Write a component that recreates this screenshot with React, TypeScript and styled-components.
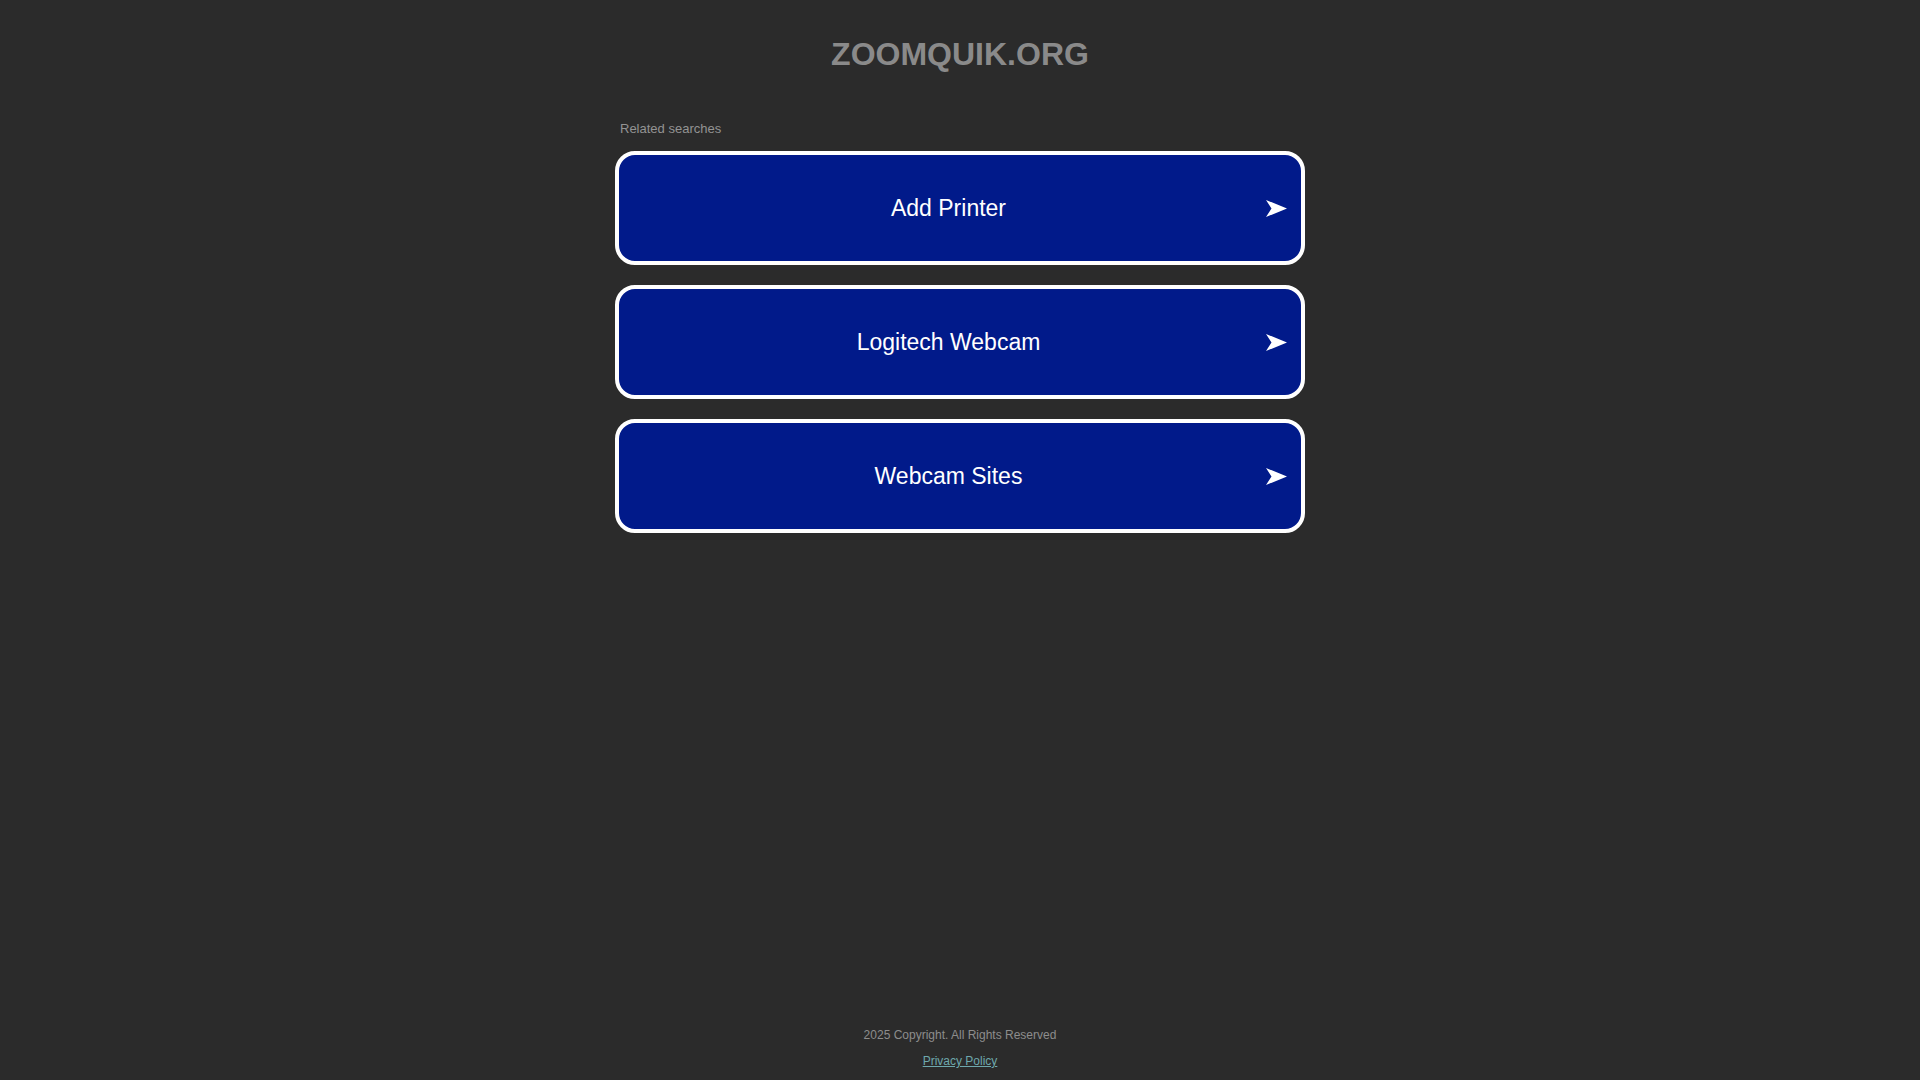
import React from 'react';
import styled, { createGlobalStyle } from 'styled-components';

const GlobalStyle = createGlobalStyle`
  html, body {
    margin: 0;
    padding: 0;
    background: #2b2b2b;
  }
  body {
    font-family: 'Liberation Sans', Arial, sans-serif;
  }
`;

const searches = ['Add Printer', 'Logitech Webcam', 'Webcam Sites'];

const Page = styled.div`
  min-height: 100vh;
  display: flex;
  flex-direction: column;
  align-items: center;
`;

const Title = styled.h1`
  margin: 36px 0 0;
  font-size: 32px;
  line-height: 36px;
  font-weight: 700;
  color: #8a8a8a;
  text-align: center;
`;

const Related = styled.section`
  width: 690px;
  margin-top: 49px;
  display: flex;
  flex-direction: column;
`;

const RelatedLabel = styled.div`
  padding-left: 5px;
  font-size: 13px;
  line-height: 16px;
  color: #939393;
  margin-bottom: 14px;
`;

const List = styled.div`
  display: flex;
  flex-direction: column;
  gap: 20px;
`;

const SearchLink = styled.a`
  box-sizing: border-box;
  height: 114px;
  display: flex;
  align-items: center;
  border: 4px solid #fff;
  border-radius: 20px;
  background: #011a8a;
  color: #fff;
  text-decoration: none;
  cursor: pointer;
`;

const SearchText = styled.span`
  flex: 1;
  padding-left: 12px;
  text-align: center;
  font-size: 23px;
  line-height: 28px;
`;

const Arrow = styled.svg`
  width: 21px;
  height: 17px;
  margin-right: 14px;
  flex-shrink: 0;
`;

const Footer = styled.footer`
  margin-top: auto;
  padding-bottom: 12px;
  display: flex;
  flex-direction: column;
  align-items: center;
  font-size: 12px;
  line-height: 14px;
`;

const Copyright = styled.div`
  color: #8d8d8d;
  margin-bottom: 12px;
`;

const PrivacyLink = styled.a`
  color: #6ea8ad;
  text-decoration: underline;
`;

const App = () => {
  return (
    <>
      <GlobalStyle />
      <Page>
        <Title>ZOOMQUIK.ORG</Title>
        <Related>
          <RelatedLabel>Related searches</RelatedLabel>
          <List>
            {searches.map((s) => (
              <SearchLink key={s}>
                <SearchText>{s}</SearchText>
                <Arrow viewBox="0 0 21 17">
                  <path d="M0 0 L21 8.5 L0 17 L5.5 8.5 Z" fill="#fff" />
                </Arrow>
              </SearchLink>
            ))}
          </List>
        </Related>
        <Footer>
          <Copyright>2025 Copyright. All Rights Reserved</Copyright>
          <PrivacyLink href="#">Privacy Policy</PrivacyLink>
        </Footer>
      </Page>
    </>
  );
};

export default App;
